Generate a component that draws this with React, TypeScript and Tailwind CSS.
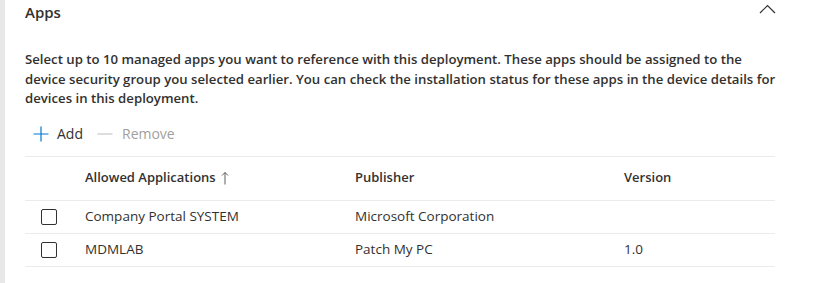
const rows = [
  { name: 'Company Portal SYSTEM', publisher: 'Microsoft Corporation', version: '' },
  { name: 'MDMLAB', publisher: 'Patch My PC', version: '1.0' },
];

export default function App() {
  return (
    <div className="flex h-[283px] w-[825px] bg-white text-[#323130] font-['Open_Sans','Liberation_Sans',sans-serif]">
      <div className="w-[5px] shrink-0 bg-[#e8e8e8]" />
      <div className="w-[770px] pl-[20px]">
        {/* Section header */}
        <div className="flex h-[24px] items-center justify-between">
          <span className="text-[15px] leading-[20px] font-semibold">Apps</span>
          <svg width="17" height="10" viewBox="0 0 17 10" className="mt-[-6px] mr-[-1px]" fill="none">
            <polyline points="1,9 8.5,1.5 16,9" stroke="#323130" strokeWidth="1.2" />
          </svg>
        </div>

        <p className="mt-[26px] text-[13.2px] leading-[19.5px] font-semibold whitespace-nowrap">
          Select up to 10 managed apps you want to reference with this deployment. These apps should be assigned to the
          <br />
          device security group you selected earlier. You can check the installation status for these apps in the device details for
          <br />
          devices in this deployment.
        </p>

        {/* Toolbar */}
        <div className="mt-[12px] flex h-[26px] items-center pl-[8px] text-[14px]">
          <svg width="16" height="16" viewBox="0 0 16 16">
            <path d="M8 0.5V15.5M0.5 8H15.5" stroke="#0078d4" strokeWidth="1.2" />
          </svg>
          <span className="ml-[8px]">Add</span>
          <svg width="16" height="16" viewBox="0 0 16 16" className="ml-[14px]">
            <path d="M0.5 8H15.5" stroke="#c8c6c4" strokeWidth="1.2" />
          </svg>
          <span className="ml-[9px] text-[#a19f9d]">Remove</span>
        </div>

        {/* Table */}
        <div className="mt-[9px] border-t border-[#edebe9] text-[13.5px]">
          <div className="flex h-[44px] items-center border-b border-[#edebe9] font-semibold text-[13px]">
            <div className="w-[60px]" />
            <div className="w-[270px] flex items-center">
              Allowed Applications
              <svg width="8" height="14" viewBox="0 0 8 14" className="ml-[5px]" fill="none">
                <path d="M4 1.5V13.5M1 4.5L4 1.5L7 4.5" stroke="#605e5c" strokeWidth="1" />
              </svg>
            </div>
            <div className="w-[269px]">Publisher</div>
            <div>Version</div>
          </div>
          {rows.map(r => (
            <div key={r.name} className="flex h-[33px] items-center border-b border-[#edebe9] font-normal">
              <div className="w-[60px] pl-[16px]">
                <div className="w-[16px] h-[16px] rounded-[2px] border border-[#323130]" />
              </div>
              <div className="w-[270px]">{r.name}</div>
              <div className="w-[269px]">{r.publisher}</div>
              <div>{r.version}</div>
            </div>
          ))}
        </div>
      </div>
    </div>
  );
}
